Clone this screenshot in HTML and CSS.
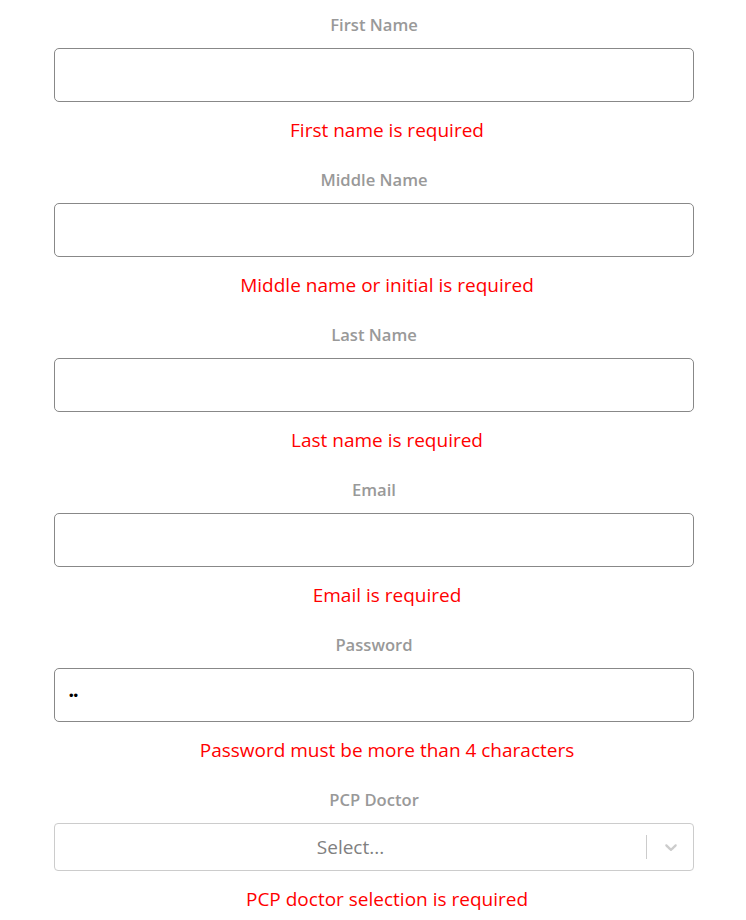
FILE: index.html
```html
<!DOCTYPE html>
<html>
<head>
<meta charset="utf-8">
<link rel="stylesheet" href="styles.css">
</head>
<body>
<form class="form">
  <div class="field">
    <label class="label">First Name</label>
    <input class="input" type="text">
    <div class="error">First name is required</div>
  </div>
  <div class="field">
    <label class="label">Middle Name</label>
    <input class="input" type="text">
    <div class="error">Middle name or initial is required</div>
  </div>
  <div class="field">
    <label class="label">Last Name</label>
    <input class="input" type="text">
    <div class="error">Last name is required</div>
  </div>
  <div class="field">
    <label class="label">Email</label>
    <input class="input" type="text">
    <div class="error">Email is required</div>
  </div>
  <div class="field">
    <label class="label">Password</label>
    <input class="input" type="password" value="ab">
    <div class="error">Password must be more than 4 characters</div>
  </div>
  <div class="field">
    <label class="label">PCP Doctor</label>
    <div class="select">
      <div class="select-value">Select...</div>
      <div class="select-indicators">
        <span class="select-sep"></span>
        <svg class="chevron" width="20" height="20" viewBox="0 0 20 20"><path fill="currentColor" d="M4.516 7.548c0.436-0.446 1.043-0.481 1.576 0l3.908 3.747 3.908-3.747c0.533-0.481 1.141-0.446 1.574 0 0.436 0.445 0.408 1.197 0 1.615-0.406 0.418-4.695 4.502-4.695 4.502-0.217 0.223-0.502 0.335-0.787 0.335s-0.57-0.112-0.789-0.335c0 0-4.287-4.084-4.695-4.502s-0.436-1.170 0-1.615z"/></svg>
      </div>
    </div>
    <div class="error">PCP doctor selection is required</div>
  </div>
</form>
</body>
</html>
```

FILE: styles.css
```css
html, body {
  margin: 0;
  padding: 0;
  background: #fff;
}
body {
  font-family: "Open Sans", "Noto Sans", sans-serif;
}
.form {
  width: 640px;
  margin-left: 54px;
  padding-top: 15px;
  display: flex;
  flex-direction: column;
  gap: 27px;
}
.field {
  display: flex;
  flex-direction: column;
}
.label {
  display: block;
  text-align: center;
  font-size: 16.6px;
  line-height: 20px;
  font-weight: 600;
  color: #999;
  margin-bottom: 13px;
}
.input {
  box-sizing: border-box;
  height: 54px;
  width: 100%;
  border: 1px solid #888;
  border-radius: 5px;
  padding: 0 14px;
  font-size: 13px;
  color: #000;
  outline: none;
  margin: 0;
}
.error {
  margin-top: 15px;
  text-align: center;
  padding-left: 26px;
  font-size: 19px;
  line-height: 26px;
  color: #ff0000;
}
.select {
  box-sizing: border-box;
  height: 48px;
  border: 1px solid #ccc;
  border-radius: 4px;
  display: flex;
  align-items: center;
}
.select-value {
  flex: 1;
  text-align: center;
  font-size: 19px;
  color: #808080;
}
.select-indicators {
  display: flex;
  align-items: center;
  height: 100%;
}
.select-sep {
  width: 1px;
  height: 24px;
  background: #ccc;
}
.chevron {
  color: #ccc;
  padding: 0 12px 0 14px;
}
```
